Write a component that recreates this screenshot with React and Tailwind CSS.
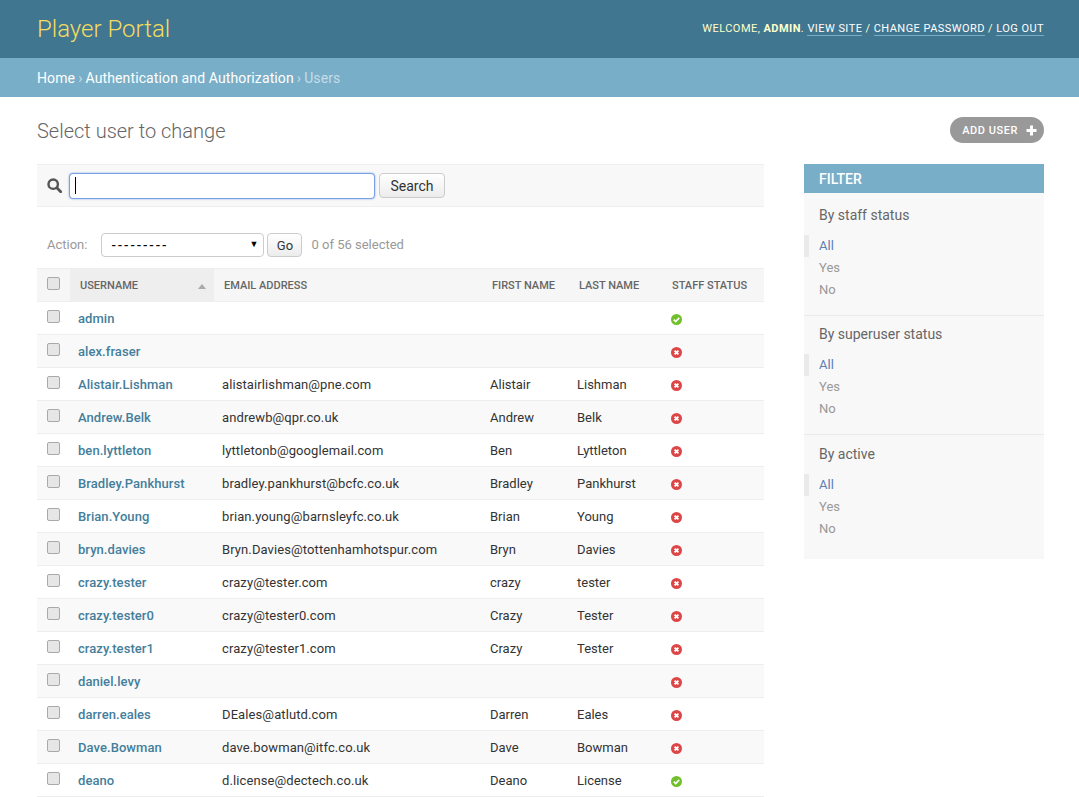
import React from 'react';

const users = [
  { username: 'admin', email: '', first: '', last: '', staff: true },
  { username: 'alex.fraser', email: '', first: '', last: '', staff: false },
  { username: 'Alistair.Lishman', email: 'alistairlishman@pne.com', first: 'Alistair', last: 'Lishman', staff: false },
  { username: 'Andrew.Belk', email: 'andrewb@qpr.co.uk', first: 'Andrew', last: 'Belk', staff: false },
  { username: 'ben.lyttleton', email: 'lyttletonb@googlemail.com', first: 'Ben', last: 'Lyttleton', staff: false },
  { username: 'Bradley.Pankhurst', email: 'bradley.pankhurst@bcfc.co.uk', first: 'Bradley', last: 'Pankhurst', staff: false },
  { username: 'Brian.Young', email: 'brian.young@barnsleyfc.co.uk', first: 'Brian', last: 'Young', staff: false },
  { username: 'bryn.davies', email: 'Bryn.Davies@tottenhamhotspur.com', first: 'Bryn', last: 'Davies', staff: false },
  { username: 'crazy.tester', email: 'crazy@tester.com', first: 'crazy', last: 'tester', staff: false },
  { username: 'crazy.tester0', email: 'crazy@tester0.com', first: 'Crazy', last: 'Tester', staff: false },
  { username: 'crazy.tester1', email: 'crazy@tester1.com', first: 'Crazy', last: 'Tester', staff: false },
  { username: 'daniel.levy', email: '', first: '', last: '', staff: false },
  { username: 'darren.eales', email: 'DEales@atlutd.com', first: 'Darren', last: 'Eales', staff: false },
  { username: 'Dave.Bowman', email: 'dave.bowman@itfc.co.uk', first: 'Dave', last: 'Bowman', staff: false },
  { username: 'deano', email: 'd.license@dectech.co.uk', first: 'Deano', last: 'License', staff: true },
];

function StatusIcon({ ok }) {
  return (
    <svg width="11" height="11" viewBox="0 0 11 11" className="block">
      <circle cx="5.5" cy="5.5" r="5.5" fill={ok ? '#70bf2b' : '#dd4646'} />
      {ok ? (
        <path d="M2.8 5.6l1.9 1.9 3.5-3.6" fill="none" stroke="#fff" strokeWidth="1.7" />
      ) : (
        <path d="M3.6 3.6l3.8 3.8M7.4 3.6l-3.8 3.8" fill="none" stroke="#fff" strokeWidth="1.9" />
      )}
    </svg>
  );
}

function Checkbox() {
  return <span className="block w-[13px] h-[13px] rounded-[2px] border border-[#a9a9a9] bg-[#e6e6e6]" />;
}

function FilterGroup({ title, className, titleClass }) {
  return (
    <div className={className}>
      <h3 className={`pl-[15px] text-[14px] leading-[18px] text-[#666] ${titleClass}`}>{title}</h3>
      <ul className="mt-[11px] text-[13px] leading-[22px]">
        <li className="pl-[10px] border-l-[5px] border-[#eaeaea] text-[#5b80b2]">All</li>
        <li className="pl-[15px] text-[#999]">Yes</li>
        <li className="pl-[15px] text-[#999]">No</li>
      </ul>
    </div>
  );
}

export default function App() {
  return (
    <div className="min-h-[797px] bg-white text-[#333] font-['Roboto',sans-serif] text-[14px]">
      <div className="h-[58px] bg-[#417690] pl-[37px] pr-[35px] flex items-center justify-between">
        <h1 className="text-[24px] font-light text-[#f5dd5d]">Player Portal</h1>
        <div className="text-[11px] tracking-[0.45px] uppercase text-[#ffc] font-normal">
          Welcome, <strong className="font-bold">admin</strong>.{' '}
          <a className="border-b border-[#79aec8] text-white">View site</a> /{' '}
          <a className="border-b border-[#79aec8] text-white">Change password</a> /{' '}
          <a className="border-b border-[#79aec8] text-white">Log out</a>
        </div>
      </div>

      <div className="h-[39px] bg-[#79aec8] pl-[37px] pt-[1px] flex items-center text-[14px] tracking-[0.12px] text-[#c4dce8]">
        <a className="text-white">Home</a>
        <span className="mx-[3px]">›</span>
        <a className="text-white">Authentication and Authorization</a>
        <span className="mx-[3px]">›</span>
        <span>Users</span>
      </div>

      <div className="pl-[37px] pr-[35px]">
        <div className="h-[67px] flex items-center justify-between">
          <h2 className="text-[20px] font-light text-[#666]">Select user to change</h2>
          <a className="h-[26px] mt-[-1px] pl-[12px] pr-[7px] rounded-[13px] bg-[#999] text-white text-[11px] font-medium tracking-[0.55px] flex items-center gap-[8px]">
            <span className="pt-[3px]">ADD USER</span>
            <svg width="11" height="11" viewBox="0 0 11 11"><path d="M4 0.5h3v3.5h3.5v3H7v3.5H4V7H0.5V4H4z" fill="#fff" /></svg>
          </a>
        </div>

        <div className="flex gap-[40px] items-start">
          <div className="w-[727px]">
            <div className="h-[43px] bg-[#f8f8f8] border-y border-[#eee] flex items-center pl-[10px]">
              <svg width="15" height="15" viewBox="0 0 15 15" className="mr-[7px]">
                <circle cx="6.2" cy="6.2" r="4.7" fill="none" stroke="#555" strokeWidth="2.4" />
                <path d="M9.8 9.8l3.9 3.9" fill="none" stroke="#555" strokeWidth="2.8" strokeLinecap="round" />
              </svg>
              <div className="w-[306px] h-[26px] bg-white rounded-[4px] border border-[#79a0e6] shadow-[0_0_2px_#79a0e6] flex items-center pl-[5px]">
                <span className="w-px h-[17px] bg-black" />
              </div>
              <button className="ml-[4px] pt-[1px] h-[25px] w-[66px] rounded-[4px] border border-[#ccc] bg-gradient-to-b from-white to-[#ececec] text-[14px] text-[#333]">Search</button>
            </div>

            <div className="h-[61px] flex items-center pl-[10px] pt-[15px] text-[13px]">
              <span className="text-[#999]">Action:</span>
              <div className="ml-[14px] w-[163px] h-[24px] rounded-[4px] border border-[#ccc] bg-white flex items-center justify-between pl-[9px] pr-[5px] text-black">
                <span className="pt-[2px] text-[13px] font-medium tracking-[1.9px]">---------</span>
                <span className="text-[9px]">▼</span>
              </div>
              <button className="ml-[3px] pt-[1px] w-[35px] h-[24px] rounded-[4px] border border-[#ccc] bg-gradient-to-b from-white to-[#ececec] text-[13px] text-[#333]">Go</button>
              <span className="ml-[9px] text-[#999]">0 of 56 selected</span>
            </div>

            <table className="w-full table-fixed border-separate border-spacing-0 text-[13px]">
              <colgroup>
                <col className="w-[33px]" />
                <col className="w-[144px]" />
                <col className="w-[268px]" />
                <col className="w-[87px]" />
                <col className="w-[93px]" />
                <col />
              </colgroup>
              <thead>
                <tr className="h-[34px] bg-[#f6f6f6] text-left text-[11px] font-medium text-[#666]">
                  <th className="pl-[10px] pb-[3px] border-y border-[#eee]"><Checkbox /></th>
                  <th className="bg-[#eee] pl-[10px] pt-[3px] font-medium border-y border-[#eee]">
                    <div className="flex items-center justify-between pr-[8px]">
                      USERNAME
                      <svg width="8" height="5" viewBox="0 0 8 5"><path d="M4 0l4 5H0z" fill="#aaa" /></svg>
                    </div>
                  </th>
                  <th className="pl-[10px] pt-[3px] font-medium border-y border-[#eee]">EMAIL ADDRESS</th>
                  <th className="pl-[10px] pt-[3px] font-medium border-y border-[#eee]">FIRST NAME</th>
                  <th className="pl-[10px] pt-[3px] font-medium border-y border-[#eee]">LAST NAME</th>
                  <th className="pl-[10px] pt-[3px] font-medium border-y border-[#eee]">STAFF STATUS</th>
                </tr>
              </thead>
              <tbody>
                {users.map((user, index) => (
                  <tr key={user.username} className={`h-[33px] ${index % 2 ? 'bg-[#f9f9f9]' : 'bg-white'}`}>
                    <td className="pl-[10px] pb-[3px] border-b border-[#eee]"><Checkbox /></td>
                    <td className="pl-[8px] pt-[2px] font-medium tracking-[0.06px] text-[#447e9b] border-b border-[#eee]">{user.username}</td>
                    <td className="pl-[8px] pt-[2px] tracking-[0.1px] border-b border-[#eee]">{user.email}</td>
                    <td className="pl-[8px] pt-[2px] border-b border-[#eee]">{user.first}</td>
                    <td className="pl-[8px] pt-[2px] border-b border-[#eee]">{user.last}</td>
                    <td className="pl-[9px] pt-[2px] border-b border-[#eee]"><StatusIcon ok={user.staff} /></td>
                  </tr>
                ))}
              </tbody>
            </table>
          </div>

          <div className="w-[240px] bg-[#f8f8f8]">
            <h2 className="h-[29px] bg-[#79aec8] pl-[15px] pt-[1px] flex items-center text-[14px] font-medium text-white">FILTER</h2>
            <FilterGroup title="By staff status" className="h-[123px] border-b border-[#eaeaea]" titleClass="pt-[13px]" />
            <FilterGroup title="By superuser status" className="h-[119px] border-b border-[#eaeaea]" titleClass="pt-[9px]" />
            <FilterGroup title="By active" className="h-[124px]" titleClass="pt-[10px]" />
          </div>
        </div>
      </div>
    </div>
  );
}
